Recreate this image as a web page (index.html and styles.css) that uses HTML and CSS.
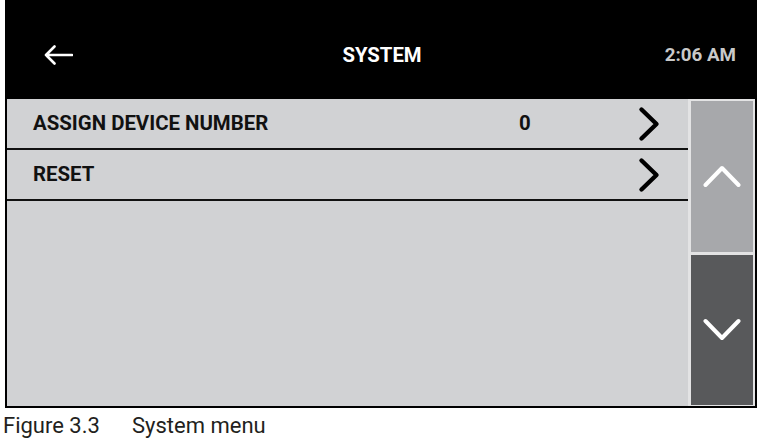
FILE: index.html
```html
<!DOCTYPE html>
<html>
<head>
<meta charset="utf-8">
<link rel="stylesheet" href="styles.css">
</head>
<body>
<div class="screen">
  <div class="header">
    <div class="back">
      <svg width="29" height="20" viewBox="0 0 29 20"><path d="M28 10 H2 M10.5 1.5 L2 10 L10.5 18.5" fill="none" stroke="#fff" stroke-width="2.6" stroke-linecap="round" stroke-linejoin="round"/></svg>
    </div>
    <div class="title">SYSTEM</div>
    <div class="time">2:06 AM</div>
  </div>
  <div class="main">
    <div class="list">
      <div class="row">
        <span class="label">ASSIGN DEVICE NUMBER</span>
        <span class="value">0</span>
        <svg class="chev" width="22" height="36" viewBox="0 0 22 36"><path d="M3.5 3.5 L18.5 18 L3.5 32.5" fill="none" stroke="#000" stroke-width="4.4" stroke-linecap="round" stroke-linejoin="round"/></svg>
      </div>
      <div class="row">
        <span class="label">RESET</span>
        <span class="value"></span>
        <svg class="chev" width="22" height="36" viewBox="0 0 22 36"><path d="M3.5 3.5 L18.5 18 L3.5 32.5" fill="none" stroke="#000" stroke-width="4.4" stroke-linecap="round" stroke-linejoin="round"/></svg>
      </div>
    </div>
    <div class="scroll">
      <div class="btn up">
        <svg width="38" height="24" viewBox="0 0 38 24"><path d="M2.5 21 L19 4 L35.5 21" fill="none" stroke="#fff" stroke-width="4" stroke-linecap="round" stroke-linejoin="round"/></svg>
      </div>
      <div class="btn down">
        <svg width="38" height="24" viewBox="0 0 38 24"><path d="M2.5 3 L19 20 L35.5 3" fill="none" stroke="#fff" stroke-width="4" stroke-linecap="round" stroke-linejoin="round"/></svg>
      </div>
    </div>
  </div>
</div>
<div class="caption"><span class="fig">Figure 3.3</span><span>System menu</span></div>
</body>
</html>
```
FILE: styles.css
```css
html, body {
  margin: 0;
  padding: 0;
  background: #fff;
}
body {
  font-family: Roboto, "Liberation Sans", sans-serif;
}
.screen {
  margin-left: 5px;
  width: 752px;
  height: 408px;
  box-sizing: border-box;
  border: 2px solid #000;
  display: flex;
  flex-direction: column;
  background: #d1d2d4;
}
.header {
  height: 97px;
  box-sizing: border-box;
  padding-top: 8px;
  background: #000;
  display: grid;
  grid-template-columns: 1fr auto 1fr;
  align-items: center;
  flex-shrink: 0;
}
.back {
  padding-left: 37px;
  display: flex;
  align-items: center;
}
.title {
  color: #fff;
  font-weight: 700;
  font-size: 20.3px;
  padding-left: 2px;
}
.time {
  justify-self: end;
  color: #c9c9c9;
  font-weight: 700;
  font-size: 18.8px;
  padding-right: 19px;
}
.main {
  flex: 1;
  display: flex;
}
.list {
  flex: 1;
  display: flex;
  flex-direction: column;
}
.row {
  height: 49px;
  border-bottom: 2px solid #111;
  display: flex;
  align-items: center;
  padding-left: 26px;
  padding-right: 28px;
}
.label {
  font-weight: 700;
  font-size: 20.4px;
  color: #111;
  width: 486px;
  margin-top: -2px;
}
.value {
  font-weight: 700;
  font-size: 20.4px;
  color: #111;
  flex: 1;
  margin-top: -2px;
}
.chev {
  display: block;
  margin-top: 1px;
}
.scroll {
  width: 67px;
  box-sizing: border-box;
  background: #e3e3e4;
  padding: 2px 2px 1px 3px;
  display: flex;
  flex-direction: column;
  gap: 3px;
}
.btn {
  flex: 1;
  display: flex;
  align-items: center;
  justify-content: center;
}
.up {
  background: #a7a8ab;
}
.down {
  background: #58595b;
}
.caption {
  margin-left: 3px;
  margin-top: 4px;
  font-size: 22px;
  line-height: 28px;
  color: #231f20;
  display: flex;
}
.fig {
  width: 129px;
}
```
